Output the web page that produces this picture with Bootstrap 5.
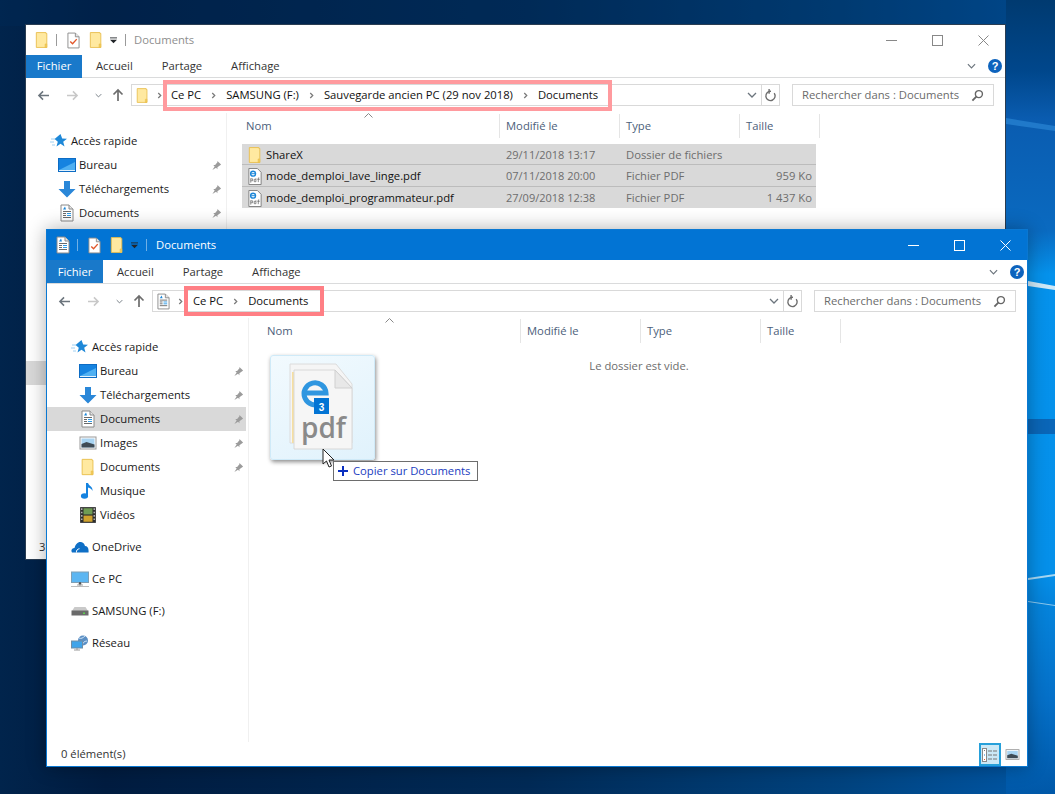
<!DOCTYPE html>
<html lang="fr">
<head>
<meta charset="UTF-8">
<title>Documents</title>
<link href="https://cdn.jsdelivr.net/npm/bootstrap@5.3.0/dist/css/bootstrap.min.css" rel="stylesheet">
<style>
  html, body { height: 100%; }
  body {
    margin: 0; overflow: hidden;
    font-family: "Open Sans", "Noto Sans", sans-serif; font-size: 11.25px; color: #1a1a1a;
  }
  .desk { width: 1055px; height: 794px; overflow: hidden; background: #01244c; }
  .fen { position: absolute; background: #fff; display: flex; flex-direction: column; }
  .fen-back { left: 25px; top: 24px; width: 981px; height: 536px; border: 1px solid #2a3d52; }
  .fen-front { left: 46px; top: 229px; width: 982px; height: 538px; border: 1px solid #0a78d2; box-shadow: 0 0 18px rgba(0,0,0,.32); }
  .titre { height: 30px; flex: none; padding-left: 9px; }
  .fen-front .titre { background: #0274d4; color: #fff; }
  .fen-back .titre { color: #8e8e8e; }
  .titre-txt { margin-left: 8px; }
  .fen-front .titre-txt { margin-left: 9px; }
  .sep-v { width: 1px; height: 12px; background: #9a9a9a; flex: none; }
  .sep-a { margin: 0 10px 0 7px; }
  .sep-b { margin-left: 8px; }
  .fen-front .sep-v { background: #6fb0e6; }
  .qat-dossier { margin-left: 9px; }
  .qat-fl { margin-left: 7px; }
  .win-grp { margin-right: -1px; }
  .win-btn { width: 46px; }
  .onglets { height: 23px; flex: none; border-bottom: 1px solid #dadbdc; padding-right: 3px; }
  .fen-front .onglets { height: 24px; }
  .onglet { color: #333; }
  .fen-front .onglet { padding-top: 1px; }
  .onglet-f { width: 56px; height: 23px; background: #1979ca; color: #fff; text-align: center; line-height: 22px; margin-right: 14px; }
  .fen-front .onglet-f { line-height: 24px; }
  .onglet + .onglet { margin-left: 29px; }
  .adr { height: 35px; flex: none; padding: 6px 11px 7px 11px; }
  .fen-front .adr { height: 34px; padding-bottom: 6px; }
  .nav-off { color: #c8c8c8; }
  .nav-haut { margin-left: 10px; }
  .boite { height: 22px; border: 1px solid #d9d9d9; }
  .boite-adr { margin-left: 7px; }
  .chemin { flex: 1 1 0; min-width: 0; padding-left: 4px; }
  .cadre { height: 31px; border: 4px solid #ff9a9e; padding: 0 10px 0 4px; margin-left: 1px; color: #111; position: relative; }
  .fen-front .cadre { border-color: #ff7f85; height: 30px; padding: 0 12px 0 5px; }
  .chev { margin: 0 10px; }
  .refresh { width: 18px; height: 100%; border-left: 1px solid #d9d9d9; }
  .cherche { width: 202px; margin-left: 12px; padding: 0 9px; color: #6b6b6b; flex: none; }
  .corps { flex: 1 1 0; min-height: 0; }
  .lat { width: 202px; flex: none; border-right: 1px solid #f0f0f0; padding-top: 8px; overflow: hidden; }
  .fen-back .lat { width: 201px; }
  .fen-front .lat { padding-top: 9px; }
  .lat-li { height: 24px; padding-left: 32px; padding-right: 4px; }
  .lat-li.haut { padding-left: 24px; }
  .lat-li.sel { background: #d9d9d9; margin-right: 2px; padding-right: 2px; }
  .lat-gap { height: 8px; }
  .lat-vide { height: 136px; }
  .lat-ic { width: 18px; height: 18px; margin-right: 3px; flex: none; }
  .lat-txt { flex: 1 1 0; }
  .principal { flex: 1 1 0; position: relative; padding-left: 14px; min-width: 0; }
  .fen-back .principal { padding-left: 15px; }
  .entetes { height: 25px; padding-top: 1px; color: #4c607a; position: relative; }
  .ent { height: 100%; padding-left: 6px; border-right: 1px solid #e5e5e5; flex: none; }
  .c-nom { width: 258px; padding-left: 4px; }
  .c-mod, .c-typ { width: 120px; }
  .c-tai { width: 80px; }
  .tri { position: absolute; left: 122px; top: 0; }
  .lignes { margin-top: 6px; }
  .ligne { height: 21.33px; padding-top: 2px; background: #d9d9d9; width: 574px; border-bottom: 1px solid #bcbcbc; color: #6d6d6d; }
  .ligne:last-child { border-bottom: 0; }
  .l-nom { width: 258px; flex: none; color: #111; padding-left: 6px; }
  .l-nom svg { margin-right: 4px; }
  .l-mod { width: 120px; flex: none; padding-left: 6px; font-size: 11px; }
  .l-typ { width: 120px; flex: none; padding-left: 6px; }
  .l-tai { width: 76px; flex: none; text-align: right; padding-right: 4px; }
  .vide { text-align: center; color: #6d6d6d; margin-top: 15px; padding-right: 12px; }
  .etat { height: 24px; flex: none; padding-left: 13px; padding-top: 1px; color: #333; }
  .fen-front .etat { padding-left: 14px; }
  .vue { width: 22px; height: 23px; border: 2px solid #26a0da; background: #cbe8f6; }
  .vue-bar { margin-left: auto; margin-right: 7px; height: 23px; }
  .fantome {
    position: absolute; left: 21px; top: 37px; width: 105px; height: 105px; border-radius: 3px;
    background: linear-gradient(150deg, #f2fafe, #e0f2fc); border: 1px solid #cfeaf8;
    box-shadow: 1px 2px 4px rgba(0,0,0,.45);
  }
  .bulle {
    position: absolute; left: 84px; top: 143px; width: 145px; height: 20px;
    background: #fff; border: 1px solid #6d6d6d; color: #1a3cc0; padding-left: 4px;
  }
  .bulle svg { margin-right: 5px; }
  .curseur { position: absolute; left: 73px; top: 130px; }
</style>
</head>
<body>
<svg width="0" height="0" class="position-absolute">
  <defs>
    <symbol id="i-dossier" viewBox="0 0 16 20"><path d="M1.5 1.5h11v1h1v16h-12z" fill="#ffe9a0" stroke="#e8bd4a"/><path d="M11.500 14.500h2v4h-2z" fill="#f2ca5a" stroke="#e8bd4a" stroke-width=".6"/></symbol>
    <symbol id="i-coche" viewBox="0 0 14 18"><path d="M1 1h8l4 4v12H1z" fill="#fff" stroke="#8a8a8a"/><path d="M9 1v4h4" fill="#e6e6e6" stroke="#8a8a8a"/><path d="M3.500 10l2.500 2.500 4.500-5" fill="none" stroke="#e2572b" stroke-width="1.500"/></symbol>
    <symbol id="i-doc" viewBox="0 0 14 18"><path d="M1 1h8l4 4v12H1z" fill="#fff" stroke="#8a8a8a"/><path d="M9 1v4h4" fill="#e6e6e6" stroke="#8a8a8a"/><path d="M3 7.500h8M3 9.500h3M3 11.500h3M3 13.500h8" stroke="#6a6a6a"/><path d="M5 2.500l-2 3h3z" fill="#1b86d8"/><path d="M7 9.500h4M7 11.500h4" stroke="#2e9be6"/></symbol>
    <symbol id="i-pdf" viewBox="0 0 14 18"><path d="M.5.500h9l4 4v13H.5z" fill="#fff" stroke="#7e7e7e"/><circle cx="5" cy="6" r="2.600" fill="none" stroke="#1b86d8" stroke-width="1.500"/><path d="M3 6h4" stroke="#1b86d8"/><path d="M2.500 11v4.500M2.500 11.500h2v2h-2M8 11v3.500H6.200v-2.500H8M11.500 10.500h-1v4.500M9.500 12h2.500" fill="none" stroke="#6a6a6a" stroke-width=".8"/></symbol>
    <symbol id="i-etoile" viewBox="0 0 18 16"><path d="M10.500 1l1.700 4.500 4.800.2-3.800 3 1.300 4.800-4-2.700-4 2.700 1.300-4.800-3.200-2.700z" fill="#1e88d8"/><path d="M1 6h4M0 9h4M2 12h3" stroke="#9fd0f2"/></symbol>
    <symbol id="i-bureau" viewBox="0 0 18 16"><rect x=".5" y="1.500" width="17" height="13" fill="#1583e0" stroke="#0d6cc4"/><path d="M1 13L17 5v8z" fill="#4fb0f2"/><path d="M1 13.500h16" stroke="#e3f2fd"/></symbol>
    <symbol id="i-fleche" viewBox="0 0 18 18"><path d="M6 1h6v8h5.500L9 17.500.5 9H6z" fill="#2a87d8"/></symbol>
    <symbol id="i-image" viewBox="0 0 18 16"><rect x="1" y="2" width="16" height="12" fill="#fff" stroke="#999"/><rect x="2.500" y="3.500" width="13" height="9" fill="#a9d4f2"/><path d="M2.500 9l5-2 8 2.500v3h-13z" fill="#3f4b55"/></symbol>
    <symbol id="i-note" viewBox="0 0 16 18"><path d="M7 1v12.500" stroke="#1583e0" stroke-width="2"/><ellipse cx="4.500" cy="14" rx="3.600" ry="2.800" fill="#1583e0"/><path d="M8 1c1 3 5 3.500 4.500 8-.6-2-2.500-3-4.500-3.500z" fill="#1583e0"/></symbol>
    <symbol id="i-film" viewBox="0 0 16 16"><rect x="1" y="1" width="14" height="14" fill="#2d2d2d"/><rect x="4" y="2" width="8" height="5.500" fill="#6f9c54"/><rect x="4" y="8.500" width="8" height="5.500" fill="#d0a22e"/><path d="M2.500 2v12M13.500 2v12" stroke="#ddd" stroke-dasharray="1.500 1.500"/></symbol>
    <symbol id="i-nuage" viewBox="0 0 18 12"><path d="M1 11.500c-1.500-2 0-4.500 2.500-4.500C4.500 3 7 .5 10 1c2 .3 3.500 2 4 4 2.500 0 4 2 3.500 6.500z" fill="#0f6fc6"/><path d="M5.500 11.500c-.5-2 1-3.500 3-3.800" stroke="#fff" fill="none"/></symbol>
    <symbol id="i-pc" viewBox="0 0 18 16"><rect x=".5" y="1" width="17" height="10.500" fill="#5cb6f2" stroke="#7f9fb5"/><path d="M6 14h6M8 11.500v2.500h2v-2.500" stroke="#a4a4a4"/><path d="M0 15.500h18" stroke="#bcbcbc"/></symbol>
    <symbol id="i-disque" viewBox="0 0 18 10"><path d="M3.500 1h11L17 5H1z" fill="#c9c9c9"/><rect x=".5" y="4.500" width="17" height="5" fill="#6a6a6a"/><rect x="12" y="6.500" width="2" height="1.500" fill="#5dd04f"/></symbol>
    <symbol id="i-reseau" viewBox="0 0 18 16"><circle cx="12" cy="5.500" r="5" fill="#5b8fc4"/><path d="M8 3c2 1 4 0 6-2M11 10c1-2 2-4 5-4" stroke="#cfe3f5" fill="none"/><rect x=".5" y="6" width="11" height="7" fill="#3fa4ea" stroke="#6f8da6"/><path d="M3 15h6M6 13v2" stroke="#9a9a9a"/></symbol>
    <symbol id="i-pin" viewBox="0 0 12 12"><path d="M7 1l4 4-1 .6-3 2.400v2L5.500 8.500 1.500 11l2.500-4L2.500 5.500h2L7 2.500z" fill="#9b9b9b"/></symbol>
    <symbol id="i-loupe" viewBox="0 0 14 14"><circle cx="8.500" cy="5.500" r="3.800" fill="none" stroke="#666" stroke-width="1.500"/><path d="M6 8l-4.500 4.500" stroke="#666" stroke-width="2"/></symbol>
    <symbol id="i-ret" viewBox="0 0 14 14"><path d="M11 4.500a5 5 0 1 1-3.500-2H5" fill="none" stroke="#6d6d6d" stroke-width="1.500"/><path d="M5.500 0v5" stroke="#6d6d6d" stroke-width="1.500"/></symbol>
    <symbol id="i-gauche" viewBox="0 0 14 12"><path d="M13 6H2M6.500 1.500L2 6l4.500 4.500" fill="none" stroke="currentColor" stroke-width="1.700"/></symbol>
    <symbol id="i-droite" viewBox="0 0 14 12"><path d="M1 6h11M7.500 1.500L12 6l-4.500 4.500" fill="none" stroke="currentColor" stroke-width="1.700"/></symbol>
    <symbol id="i-haut" viewBox="0 0 12 14"><path d="M6 13V2M1.500 6.500L6 2l4.500 4.500" fill="none" stroke="#6d6d6d" stroke-width="1.700"/></symbol>
    <symbol id="i-bas" viewBox="0 0 10 6"><path d="M1 1l4 4 4-4" fill="none" stroke="currentColor" stroke-width="1.300"/></symbol>
    <symbol id="i-chev" viewBox="0 0 6 8"><path d="M1.500 1L4.500 4 1.500 7" fill="none" stroke="#7a7a7a" stroke-width="1.500"/></symbol>
    <symbol id="i-qat" viewBox="0 0 8 8"><path d="M0 1h8" stroke="currentColor"/><path d="M0 3h8L4 7z" fill="currentColor"/></symbol>
    <symbol id="i-aide" viewBox="0 0 14 14"><circle cx="7" cy="7" r="7" fill="#0d63bd"/><text x="7" y="11" text-anchor="middle" font-family="Liberation Sans, sans-serif" font-weight="700" font-size="11" fill="#fff">?</text></symbol>
    <linearGradient id="fond-h" x1="0" x2="1" y1="0" y2="0">
      <stop offset="0" stop-color="#01244c"/><stop offset=".1" stop-color="#001c40"/><stop offset=".5" stop-color="#012a56"/><stop offset=".8" stop-color="#00437f"/><stop offset="1" stop-color="#0058a8"/>
    </linearGradient>
    <linearGradient id="fond-v" x1="0" x2="0" y1="0" y2="1">
      <stop offset="0" stop-color="#003a70"/><stop offset=".09" stop-color="#00478c"/><stop offset=".15" stop-color="#0a5cb0"/><stop offset=".29" stop-color="#0a6ac0"/><stop offset=".345" stop-color="#0592ec"/><stop offset=".72" stop-color="#0590ea"/><stop offset=".76" stop-color="#0584dc"/><stop offset=".88" stop-color="#0570c8"/><stop offset="1" stop-color="#0058a8"/>
    </linearGradient>
  </defs>
</svg>

<div class="desk position-relative">
  <svg class="position-absolute top-0 start-0" width="1055" height="794" viewBox="0 0 1055 794">
    <rect width="1055" height="794" fill="url(#fond-h)"/>
    <path d="M0 0h1055v26H0z" fill="#012a5a" opacity=".35"/>
    <rect x="1006" y="0" width="49" height="794" fill="url(#fond-v)"/>
    <path d="M1006 118l49 8v5l-49-7z" fill="#2a86d4" opacity=".7"/>
    <path d="M1028 281l27 5v4l-27-4z" fill="#cfe9f8"/>
    <rect x="1028" y="419" width="27" height="15" fill="#0a66b8"/>
    <path d="M1028 578l27-4v2l-27 4z" fill="#a8d8f3"/>
    <path d="M1028 601l27 4v1l-27-4z" fill="#8cc8ee"/>
  </svg>

  <!-- fenetre arriere -->
  <div class="fen fen-back">
    <div class="titre d-flex align-items-center">
      <svg width="14" height="18"><use href="#i-dossier"/></svg>
      <span class="sep-v sep-a"></span>
      <svg width="13" height="17"><use href="#i-coche"/></svg>
      <svg width="14" height="18" class="qat-dossier"><use href="#i-dossier"/></svg>
      <svg width="7" height="7" class="qat-fl text-dark"><use href="#i-qat"/></svg>
      <span class="sep-v sep-b"></span>
      <span class="titre-txt">Documents</span>
      <div class="win-grp ms-auto d-flex align-items-center text-center">
        <span class="win-btn"><svg width="11" height="11"><path d="M0 5.500h11" stroke="#888"/></svg></span>
        <span class="win-btn"><svg width="11" height="11"><rect x=".5" y=".5" width="10" height="10" fill="none" stroke="#888"/></svg></span>
        <span class="win-btn"><svg width="11" height="11"><path d="M.5.500l10 10M10.500.500l-10 10" stroke="#888"/></svg></span>
      </div>
    </div>
    <div class="onglets d-flex align-items-center">
      <span class="onglet-f">Fichier</span>
      <span class="onglet">Accueil</span>
      <span class="onglet">Partage</span>
      <span class="onglet">Affichage</span>
      <svg width="9" height="6" class="ms-auto me-2 text-secondary"><use href="#i-bas"/></svg>
      <svg width="14" height="14" class="ms-1"><use href="#i-aide"/></svg>
    </div>
    <div class="adr d-flex align-items-center">
      <svg width="13" height="11" class="text-secondary"><use href="#i-gauche"/></svg>
      <svg width="13" height="11" class="ms-3 nav-off"><use href="#i-droite"/></svg>
      <svg width="7" height="5" class="ms-3 text-secondary"><use href="#i-bas"/></svg>
      <svg width="12" height="14" class="nav-haut"><use href="#i-haut"/></svg>
      <div class="boite boite-adr d-flex align-items-center flex-grow-1">
        <div class="chemin d-flex align-items-center">
          <svg width="13" height="17"><use href="#i-dossier"/></svg>
          <svg width="5" height="7" class="ms-2"><use href="#i-chev"/></svg>
          <div class="cadre d-flex align-items-center">
            <span>Ce PC</span><svg width="5" height="7" class="chev"><use href="#i-chev"/></svg>
            <span>SAMSUNG (F:)</span><svg width="5" height="7" class="chev"><use href="#i-chev"/></svg>
            <span>Sauvegarde ancien PC (29 nov 2018)</span><svg width="5" height="7" class="chev"><use href="#i-chev"/></svg>
            <span>Documents</span>
          </div>
        </div>
        <svg width="10" height="6" class="me-1 text-secondary"><use href="#i-bas"/></svg>
        <span class="refresh d-flex align-items-center justify-content-center"><svg width="13" height="13"><use href="#i-ret"/></svg></span>
      </div>
      <div class="boite cherche d-flex align-items-center justify-content-between">
        <span>Rechercher dans : Documents</span>
        <svg width="13" height="13"><use href="#i-loupe"/></svg>
      </div>
    </div>
    <div class="corps d-flex">
      <div class="lat">
        <div class="lat-gap"></div>
        <div class="lat-li haut d-flex align-items-center"><svg class="lat-ic"><use href="#i-etoile"/></svg><span class="lat-txt">Accès rapide</span></div>
        <div class="lat-li d-flex align-items-center"><svg class="lat-ic"><use href="#i-bureau"/></svg><span class="lat-txt">Bureau</span><svg width="11" height="11"><use href="#i-pin"/></svg></div>
        <div class="lat-li d-flex align-items-center"><svg class="lat-ic"><use href="#i-fleche"/></svg><span class="lat-txt">Téléchargements</span><svg width="11" height="11"><use href="#i-pin"/></svg></div>
        <div class="lat-li d-flex align-items-center"><svg class="lat-ic"><use href="#i-doc"/></svg><span class="lat-txt">Documents</span><svg width="11" height="11"><use href="#i-pin"/></svg></div>
        <div class="lat-vide"></div>
        <div class="lat-li sel"></div>
      </div>
      <div class="principal">
        <div class="entetes d-flex">
          <svg class="tri" width="9" height="5" style="color:#888"><path d="M.5 4.500L4.500.500l4 4" fill="none" stroke="currentColor"/></svg>
          <div class="ent c-nom d-flex align-items-center">Nom</div>
          <div class="ent c-mod d-flex align-items-center">Modifié le</div>
          <div class="ent c-typ d-flex align-items-center">Type</div>
          <div class="ent c-tai d-flex align-items-center">Taille</div>
        </div>
        <div class="lignes">
          <div class="ligne d-flex align-items-center"><span class="l-nom d-flex align-items-center"><svg width="14" height="18"><use href="#i-dossier"/></svg>ShareX</span><span class="l-mod">29/11/2018 13:17</span><span class="l-typ">Dossier de fichiers</span><span class="l-tai"></span></div>
          <div class="ligne d-flex align-items-center"><span class="l-nom d-flex align-items-center"><svg width="14" height="17"><use href="#i-pdf"/></svg>mode_demploi_lave_linge.pdf</span><span class="l-mod">07/11/2018 20:00</span><span class="l-typ">Fichier PDF</span><span class="l-tai">959 Ko</span></div>
          <div class="ligne d-flex align-items-center"><span class="l-nom d-flex align-items-center"><svg width="14" height="17"><use href="#i-pdf"/></svg>mode_demploi_programmateur.pdf</span><span class="l-mod">27/09/2018 12:38</span><span class="l-typ">Fichier PDF</span><span class="l-tai">1 437 Ko</span></div>
        </div>
      </div>
    </div>
    <div class="etat d-flex align-items-center">3</div>
  </div>

  <!-- fenetre active -->
  <div class="fen fen-front">
    <div class="titre d-flex align-items-center">
      <svg width="14" height="18"><use href="#i-doc"/></svg>
      <span class="sep-v sep-a"></span>
      <svg width="13" height="17"><use href="#i-coche"/></svg>
      <svg width="14" height="18" class="qat-dossier"><use href="#i-dossier"/></svg>
      <svg width="7" height="7" class="qat-fl text-dark"><use href="#i-qat"/></svg>
      <span class="sep-v sep-b"></span>
      <span class="titre-txt">Documents</span>
      <div class="win-grp ms-auto d-flex align-items-center text-center">
        <span class="win-btn"><svg width="11" height="11"><path d="M0 5.500h11" stroke="#fff"/></svg></span>
        <span class="win-btn"><svg width="11" height="11"><rect x=".5" y=".5" width="10" height="10" fill="none" stroke="#fff"/></svg></span>
        <span class="win-btn"><svg width="11" height="11"><path d="M.5.500l10 10M10.500.500l-10 10" stroke="#fff"/></svg></span>
      </div>
    </div>
    <div class="onglets d-flex align-items-center">
      <span class="onglet-f">Fichier</span>
      <span class="onglet">Accueil</span>
      <span class="onglet">Partage</span>
      <span class="onglet">Affichage</span>
      <svg width="9" height="6" class="ms-auto me-2 text-secondary"><use href="#i-bas"/></svg>
      <svg width="14" height="14" class="ms-1"><use href="#i-aide"/></svg>
    </div>
    <div class="adr d-flex align-items-center">
      <svg width="13" height="11" class="text-secondary"><use href="#i-gauche"/></svg>
      <svg width="13" height="11" class="ms-3 nav-off"><use href="#i-droite"/></svg>
      <svg width="7" height="5" class="ms-3 text-secondary"><use href="#i-bas"/></svg>
      <svg width="12" height="14" class="nav-haut"><use href="#i-haut"/></svg>
      <div class="boite boite-adr d-flex align-items-center flex-grow-1">
        <div class="chemin d-flex align-items-center">
          <svg width="13" height="17"><use href="#i-doc"/></svg>
          <svg width="5" height="7" class="ms-2"><use href="#i-chev"/></svg>
          <div class="cadre d-flex align-items-center">
            <span>Ce PC</span><svg width="5" height="7" class="chev"><use href="#i-chev"/></svg>
            <span>Documents</span>
          </div>
        </div>
        <svg width="10" height="6" class="me-1 text-secondary"><use href="#i-bas"/></svg>
        <span class="refresh d-flex align-items-center justify-content-center"><svg width="13" height="13"><use href="#i-ret"/></svg></span>
      </div>
      <div class="boite cherche d-flex align-items-center justify-content-between">
        <span>Rechercher dans : Documents</span>
        <svg width="13" height="13"><use href="#i-loupe"/></svg>
      </div>
    </div>
    <div class="corps d-flex">
      <div class="lat">
        <div class="lat-gap"></div>
        <div class="lat-li haut d-flex align-items-center"><svg class="lat-ic"><use href="#i-etoile"/></svg><span class="lat-txt">Accès rapide</span></div>
        <div class="lat-li d-flex align-items-center"><svg class="lat-ic"><use href="#i-bureau"/></svg><span class="lat-txt">Bureau</span><svg width="11" height="11"><use href="#i-pin"/></svg></div>
        <div class="lat-li d-flex align-items-center"><svg class="lat-ic"><use href="#i-fleche"/></svg><span class="lat-txt">Téléchargements</span><svg width="11" height="11"><use href="#i-pin"/></svg></div>
        <div class="lat-li sel d-flex align-items-center"><svg class="lat-ic"><use href="#i-doc"/></svg><span class="lat-txt">Documents</span><svg width="11" height="11"><use href="#i-pin"/></svg></div>
        <div class="lat-li d-flex align-items-center"><svg class="lat-ic"><use href="#i-image"/></svg><span class="lat-txt">Images</span><svg width="11" height="11"><use href="#i-pin"/></svg></div>
        <div class="lat-li d-flex align-items-center"><svg class="lat-ic"><use href="#i-dossier"/></svg><span class="lat-txt">Documents</span><svg width="11" height="11"><use href="#i-pin"/></svg></div>
        <div class="lat-li d-flex align-items-center"><svg class="lat-ic"><use href="#i-note"/></svg><span class="lat-txt">Musique</span></div>
        <div class="lat-li d-flex align-items-center"><svg class="lat-ic"><use href="#i-film"/></svg><span class="lat-txt">Vidéos</span></div>
        <div class="lat-gap"></div>
        <div class="lat-li haut d-flex align-items-center"><svg class="lat-ic"><use href="#i-nuage"/></svg><span class="lat-txt">OneDrive</span></div>
        <div class="lat-gap"></div>
        <div class="lat-li haut d-flex align-items-center"><svg class="lat-ic"><use href="#i-pc"/></svg><span class="lat-txt">Ce PC</span></div>
        <div class="lat-gap"></div>
        <div class="lat-li haut d-flex align-items-center"><svg class="lat-ic"><use href="#i-disque"/></svg><span class="lat-txt">SAMSUNG (F:)</span></div>
        <div class="lat-gap"></div>
        <div class="lat-li haut d-flex align-items-center"><svg class="lat-ic"><use href="#i-reseau"/></svg><span class="lat-txt">Réseau</span></div>
      </div>
      <div class="principal">
        <div class="entetes d-flex">
          <svg class="tri" width="9" height="5" style="color:#888"><path d="M.5 4.500L4.500.500l4 4" fill="none" stroke="currentColor"/></svg>
          <div class="ent c-nom d-flex align-items-center">Nom</div>
          <div class="ent c-mod d-flex align-items-center">Modifié le</div>
          <div class="ent c-typ d-flex align-items-center">Type</div>
          <div class="ent c-tai d-flex align-items-center">Taille</div>
        </div>
        <div class="vide">Le dossier est vide.</div>
        <div class="fantome">
          <svg width="103" height="103" viewBox="0 0 103 103">
            <path d="M19 8h46l16 20v59H19z" fill="#f5f5f5" stroke="#dcdcdc"/>
            <rect x="21" y="16" width="3" height="71" fill="#f7dfa0"/>
            <path d="M23 14h41l17 18v61H23z" fill="#f6f6f6" stroke="#d8d8d8"/>
            <path d="M64 14v18h17z" fill="#e8e8e8" stroke="#d0d0d0"/>
            <path d="M33 37h22a11 11 0 1 0-5 10" fill="none" stroke="#2f96e0" stroke-width="5"/>
            <rect x="43" y="42" width="15" height="16" fill="#0274d4"/>
            <text x="50.500" y="55" text-anchor="middle" font-family="Liberation Sans, sans-serif" font-weight="700" font-size="10" fill="#fff">3</text>
            <text x="30" y="82" font-family="Open Sans, sans-serif" font-weight="600" font-size="28" fill="#8a8a8a">pdf</text>
          </svg>
        </div>
        <svg class="curseur" width="14" height="21" viewBox="0 0 14 21"><path d="M1 1v15l3.500-3 2.500 6 2.500-1-2.500-6h5z" fill="#fff" stroke="#222"/></svg>
        <div class="bulle d-flex align-items-center">
          <svg width="10" height="10"><path d="M5 0v10M0 5h10" stroke="#0a2fc0" stroke-width="2"/></svg>
          <span>Copier sur Documents</span>
        </div>
      </div>
    </div>
    <div class="etat d-flex align-items-center">
      <span>0 élément(s)</span>
      <div class="vue-bar d-flex align-items-center">
        <span class="vue d-flex align-items-center justify-content-center"><svg width="16" height="14"><rect x=".5" y=".5" width="4" height="13" fill="#fff" stroke="#888"/><path d="M2 2.500h1" stroke="#777"/><path d="M2 7h1" stroke="#1b86d8"/><path d="M2 11.500h1" stroke="#e2572b"/><path d="M6 3h4M11 3h4M6 7h4M11 7h4M6 11h4M11 11h4" stroke="#777"/></svg></span>
        <svg width="15" height="13" class="ms-1"><use href="#i-image"/></svg>
      </div>
    </div>
  </div>
</div>
</body>
</html>
